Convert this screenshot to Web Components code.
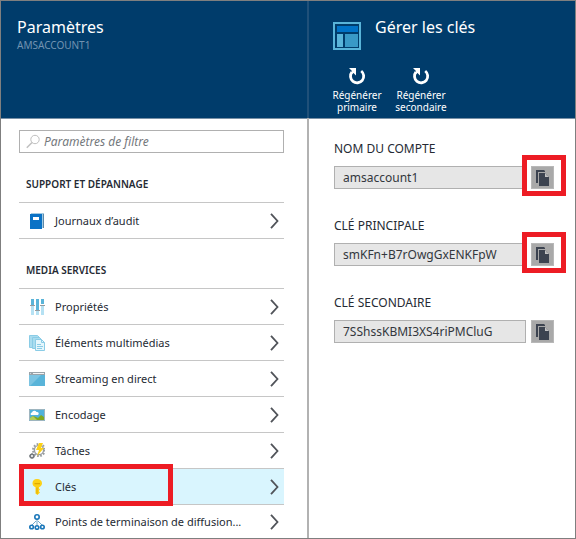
<!DOCTYPE html>
<html lang="fr">
<head>
<meta charset="utf-8">
<title>Gérer les clés</title>
<style>
  html, body { margin: 0; }
  body { font-family: "Noto Sans", "Open Sans", sans-serif; font-size: 12px; color: #252a33; background: #fff; }
</style>
</head>
<body>
<portal-shell>
  <portal-blade title-text="Paramètres" subtitle="AMSACCOUNT1">
    <filter-box></filter-box>
    <menu-group label="SUPPORT ET DÉPANNAGE" closed-end>
      <menu-row icon="book">Journaux d’audit</menu-row>
    </menu-group>
    <menu-group label="MEDIA SERVICES">
      <menu-row icon="sliders">Propriétés</menu-row>
      <menu-row icon="docs">Éléments multimédias</menu-row>
      <menu-row icon="window">Streaming en direct</menu-row>
      <menu-row icon="image">Encodage</menu-row>
      <menu-row icon="gear">Tâches</menu-row>
      <menu-row icon="key" selected>Clés</menu-row>
      <menu-row icon="nodes" last>Points de terminaison de diffusion...</menu-row>
    </menu-group>
  </portal-blade>
  <portal-blade class="detail" title-text="Gérer les clés" icon="layout">
    <command-button slot="commands">Régénérer primaire</command-button>
    <command-button slot="commands">Régénérer secondaire</command-button>
    <key-field label="NOM DU COMPTE" value="amsaccount1" marked></key-field>
    <key-field label="CLÉ PRINCIPALE" value="smKFn+B7rOwgGxENKFpW" marked></key-field>
    <key-field label="CLÉ SECONDAIRE" value="7SShssKBMI3XS4riPMCluG"></key-field>
  </portal-blade>
</portal-shell>

<script>
const ICONS = {
  book: `<path fill="#a3cbe3" d="M2 0h13v15H2z"/><path fill="#5c88a8" d="M14 1h1v14h-1z"/><path fill="#0a72c6" d="M1 1h12v15H1z"/><path fill="#fff" d="M4 4h6v3H4z"/>`,
  sliders: `<path fill="#59b4d9" d="M2 0h3v6H2zM7 0h3v11H7zM12 0h3v5h-3z"/><path fill="#b5e1f3" d="M2 7h3v9H2zM7 12h3v4H7zM12 6h3v10h-3z"/><path fill="#959b9f" d="M1 6h5v1H1zM6 11h5v1H6zM11 6h5v1h-5z"/>`,
  docs: `<g stroke="#8accE6" fill="#a9dcef"><path d="M.5.5h8l2 2v10H.5z"/><path d="M3.500 2.500h7l2 2v9h-9z"/><path fill="#e5f6fc" d="M6.500 4.500h6l3 3v8h-9z"/><path fill="none" d="M12.500 4.500v3h3M8 9.500h4M8 11.500h6M8 13.500h5"/></g>`,
  window: `<path fill="#59b4d9" d="M0 1h16v14H0z"/><path fill="#7cc4e2" d="M0 4h12L1 15H0z"/><path fill="#9aa3a9" d="M0 1h16v3H0z"/><path fill="#f2f4f5" d="M4 2h11v1H4z"/><path fill="#d3d8dc" d="M1 2h1v1H1z"/>`,
  image: `<path fill="#50b2dc" d="M0 2h16v12H0z"/><path fill="#fff" d="M2 8a1.500 1.500 0 0 1 1-2.500 2.500 2.500 0 0 1 4.500-.5A1.700 1.700 0 0 1 9 8z"/><path fill="#81a820" d="M1 13V11l3-2 3 1 2 1 3-3 3 2v3z"/><path fill="#b3ce58" d="m1 11 3-2 4 4H1z"/><path fill="none" stroke="#9eb5bf" d="M.5 2.500h15v11H.5z"/>`,
  gear: `<circle cx="10" cy="7" r="6" fill="none" stroke="#9a9ea1" stroke-width="2" stroke-dasharray="1.700 1.440"/><circle cx="10" cy="7" r="4.600" fill="#fff" stroke="#9a9ea1" stroke-width="1.400"/><path fill="#fcd116" d="M10 0h4l-2 5h3l-7 8 2-6H7z"/><circle cx="3" cy="13" r="1.800" fill="none" stroke="#777c80" stroke-width="1.600"/><path stroke="#777c80" d="M3 10v1.500m0 3V16M0 13h1.500m3 0H6M1 11l1 1m2 2 1 1m0-4-1 1m-2 2-1 1"/>`,
  key: `<path fill="#fcd116" d="M8 0c3 0 5 1.800 5 4.200C13 6 12 7.300 10 8.200v1.300l1 1-1 1v1l1 1L8.500 16 6.500 14.500V8.200C4.500 7.500 3.500 6 3.500 4.200 3.500 1.800 5 0 8 0z"/><path fill="#dfa900" d="M5.500 4h5.500v1.200H5.500zM7.500 8.500h1v6.500l-1-.7z"/>`,
  nodes: `<g fill="#fff" stroke="#1976b9" stroke-width="1.600"><path fill="none" stroke="#72a9ca" d="M8 5v6M7 7l-4 4m6-4 4 4" stroke-width="1"/><circle cx="8" cy="3" r="2.200"/><circle cx="2.600" cy="13" r="1.800"/><circle cx="8" cy="13.500" r="1.800"/><circle cx="13.400" cy="13" r="1.800"/></g>`
};

const define = (name, render) => customElements.define(name, class extends HTMLElement {
  connectedCallback() {
    if (!this.shadowRoot) this.attachShadow({ mode: "open" }).innerHTML = render(this);
  }
});

define("portal-shell", () => `
  <style>
    :host { display: grid; grid-template-columns: 308fr 266fr; box-sizing: border-box; min-height: 100vh;
      border: 1px solid #7f7f7f; }
    ::slotted(.detail) { --blade-pad: 18px 21px 0 25px; --head-pad: 15px 21px 0 24px; --blade-gap: 25px; }
  </style><slot></slot>`);

define("portal-blade", el => {
  const detail = el.hasAttribute("icon");
  return `
  <style>
    :host { display: flex; flex-direction: column; min-width: 0; }
    :host(:not([icon])) { border: 0 solid; border-right-width: 2px; border-image: linear-gradient(#1f5079 118px, #b2b2b2 118px) 1; }
    header { box-sizing: border-box; height: 118px; background: #003c6b; border-bottom: 1px solid #7890a6;
      padding: var(--head-pad, 15px 16px 0 16px); color: #fff; }
    .top { display: flex; gap: 14px; }
    .top svg { margin-top: 6px; }
    h1 { margin: 0; font-size: 16px; line-height: 22px; font-weight: 400; }
    p { margin: 0; font-size: 10px; line-height: 15px; color: #7293b1; }
    .commands { display: flex; gap: 10px; padding-top: 17px; margin-left: -3px; }
    main { display: flex; flex-direction: column; gap: var(--blade-gap, 0px); padding: var(--blade-pad, 11px 23px 0 18px); }
  </style>
  <header>
    <div class="top">
      ${detail ? `<svg width="28" height="28" viewBox="0 0 28 28" aria-hidden="true"><path fill="#59b4d9" d="M0 0h28v28H0z"/><path fill="#003c6b" d="M2 2h24v24H2z"/><path fill="#0072c6" d="M4 4h21v6H4z"/><path fill="#59b4d9" d="M4 12h6v13H4z"/><path fill="#3999c6" d="M12 12h13v13H12z"/></svg>` : ""}
      <div><h1>${el.getAttribute("title-text")}</h1>${el.hasAttribute("subtitle") ? `<p>${el.getAttribute("subtitle")}</p>` : ""}</div>
    </div>
    ${detail ? `<div class="commands"><slot name="commands"></slot></div>` : ""}
  </header>
  <main><slot></slot></main>`;
});

define("command-button", () => `
  <style>
    :host { display: block; width: 54px; }
    button { all: unset; box-sizing: border-box; display: flex; flex-direction: column; align-items: center; gap: 4px; width: 100%;
      font-size: 10px; line-height: 12px; text-align: center; color: #fff; cursor: pointer; }
    svg { display: block; }
  </style>
  <button type="button">
    <svg width="18" height="18" viewBox="0 0 18 18" aria-hidden="true"><path d="M13.200 4A6.600 6.600 0 1 1 4 5" fill="none" stroke="#fff" stroke-width="2.800"/><path d="M1 1h7v7.500L5.500 6 3 7.500 4 4z" fill="#fff"/></svg>
    <span><slot></slot></span>
  </button>`);

define("filter-box", () => `
  <style>
    :host { display: flex; align-items: center; box-sizing: border-box; height: 23px; border: 1px solid #b0b0b0; padding: 0 6px; gap: 3px; }
    input { flex: 1; min-width: 0; border: 0; padding: 0; outline: 0; background: none; font: italic 12px/18px "Noto Sans", sans-serif; color: #333; }
    input::placeholder { color: #74787c; opacity: 1; }
  </style>
  <svg width="15" height="15" viewBox="0 0 15 15" fill="none" stroke="#bfbfbf" aria-hidden="true"><circle cx="9" cy="5.500" r="4.200"/><path d="M6 8.500.8 13.700" stroke-width="1.500"/></svg>
  <input type="text" placeholder="Paramètres de filtre" aria-label="Paramètres de filtre">`);

define("menu-group", el => `
  <style>
    :host { display: block; }
    h2 { margin: 0; padding: 14px 7px 0; font-size: 10px; line-height: 35px; font-weight: 600; }
    :host([closed-end]) nav { border-bottom: 1px solid #c6c6c6; }
  </style>
  <h2>${el.getAttribute("label")}</h2><nav aria-label="${el.getAttribute("label")}"><slot></slot></nav>`);

define("menu-row", el => `
  <style>
    :host { display: block; position: relative; border-top: 1px solid #c6c6c6; }
    a { display: flex; align-items: center; gap: 10px; min-height: 35px; padding: 0 5px 0 10px; font-size: 11px; line-height: 16px;
      color: inherit; text-decoration: none; }
    span { flex: 1; min-width: 0; white-space: nowrap; }
    svg { flex: none; }
    :host([last]) a { min-height: 33px; }
    :host([selected]) a { background: #d9f5fe; }
    :host([selected])::after { content: ""; position: absolute; top: -5px; bottom: -2px; left: 0; width: 58%;
      box-sizing: border-box; border: 5px solid #ed1c24; z-index: 1; pointer-events: none; }
  </style>
  <a href="#"${el.hasAttribute("selected") ? ` aria-current="page"` : ""}>
    <svg width="16" height="16" viewBox="0 0 16 16" aria-hidden="true">${ICONS[el.getAttribute("icon")]}</svg>
    <span><slot></slot></span>
    <svg width="9" height="16" viewBox="0 0 9 16" fill="none" stroke="#505359" stroke-width="1.800" aria-hidden="true"><path d="m1 .8 6.500 7.200L1 15.200"/></svg>
  </a>`);

define("key-field", el => `
  <style>
    :host { display: flex; flex-direction: column; gap: 6px; }
    label { font-size: 12px; line-height: 23px; }
    .line { display: flex; gap: 5px; }
    input { flex: 1; min-width: 0; box-sizing: border-box; height: 23px; margin: 0; border: 1px solid #b0b0b0; border-radius: 0; padding: 0 8px;
      background: #e6e6e6; color: #33373d; font: 12px/20px "Noto Sans", sans-serif; outline: 0; }
    .copy { position: relative; }
    button { position: relative; display: grid; place-items: center; width: 23px; height: 23px; margin: 0; padding: 0; border: 1px solid #b8b8b8; background: #a9a9a9; }
    svg { display: block; }
    :host([marked]) .copy::after { content: ""; position: absolute; inset: -11px -12px -7px -9px; box-sizing: border-box;
      border: 5px solid #ed1c24; pointer-events: none; }
    :host([marked]) .copy::before { content: ""; position: absolute; inset: -7px -8px -3px -5px; background: #fff; }
  </style>
  <label for="v">${el.getAttribute("label")}</label>
  <div class="line">
    <input id="v" type="text" readonly value="${el.getAttribute("value")}">
    <div class="copy"><button type="button" aria-label="Copier"><svg width="13" height="16" viewBox="0 0 13 16" aria-hidden="true"><path fill="#3c4350" d="M0 0h8l1 1v1H2v11H0z"/><path fill="#3c4350" d="M3 3h6l4 4v9H3z"/><path fill="#c4c4c4" d="M9 3v4h4L9 3z"/><path fill="#3c4350" d="M10 5.400V6h.600z"/></svg></button></div>
  </div>`);
</script>
</body>
</html>
